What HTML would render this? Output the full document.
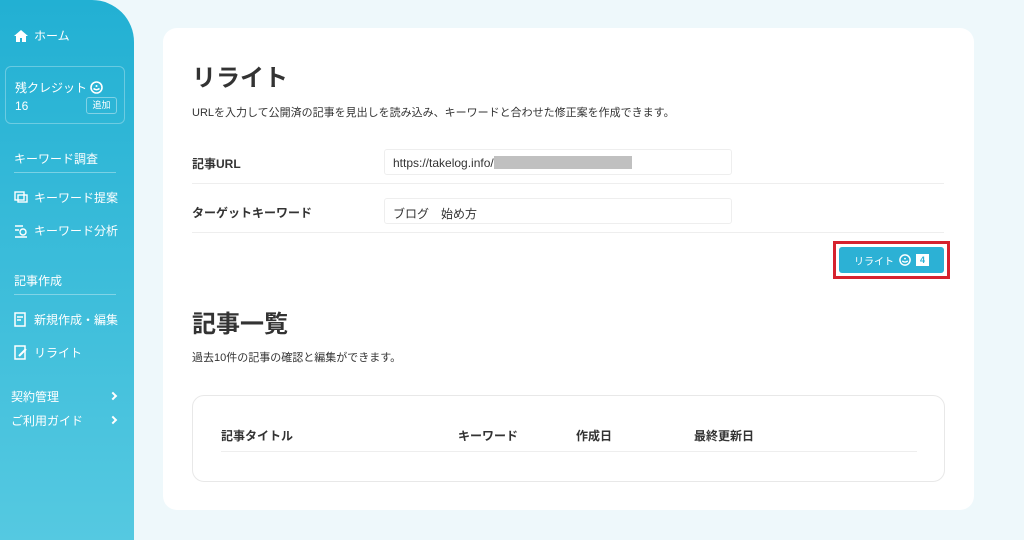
<!DOCTYPE html>
<html><head><meta charset="utf-8"><style>
*{box-sizing:border-box;margin:0;padding:0}
body{width:1024px;height:540px;overflow:hidden;background:#eef8fb;font-family:"Liberation Sans","Noto Sans CJK JP",sans-serif;color:#333;position:relative}
.side{position:absolute;left:0;top:0;width:134px;height:540px;background:linear-gradient(#22b0d3,#55c9e1);border-top-right-radius:42px;color:#fff;font-size:12px}
.side .it{position:absolute;left:14px;display:flex;align-items:center;gap:6px}
.side .hd{position:absolute;left:14px;font-size:12px}
.side .ln{position:absolute;left:14px;width:102px;height:1px;background:rgba(255,255,255,.35)}
.credit{position:absolute;left:5px;top:66px;width:120px;height:58px;border:1px solid rgba(255,255,255,.3);border-radius:6px}
.card{position:absolute;left:163px;top:28px;width:811px;height:482px;background:#fff;border-radius:14px}
.abs{position:absolute}
.inp{position:absolute;left:221px;width:348px;height:26px;border:1px solid #eee;border-radius:3px;font-size:12px;padding:6px 0 0 8px;color:#333}
.hr{position:absolute;left:29px;width:752px;height:1px;background:#eee}
.lbl{position:absolute;left:29px;font-size:12px;font-weight:bold}
.chev{position:absolute;left:110px;width:6px;height:6px;border-top:2px solid #fff;border-right:2px solid #fff;transform:rotate(45deg)}
</style></head><body>
<div class="side">
 <div class="it" style="top:27px"><svg width="14" height="12" viewBox="0 0 14 12"><path d="M7 0L0 6h2v6h4V8h2v4h4V6h2z" fill="#fff"/></svg>ホーム</div>
 <div class="credit">
  <div class="abs" style="left:9px;top:12px;font-size:12px;white-space:nowrap">残クレジット <svg width="13" height="13" viewBox="0 0 13 13" style="vertical-align:-2px"><circle cx="6.5" cy="6.5" r="5.5" fill="none" stroke="#fff" stroke-width="1.6"/><path d="M3.5 7.5q3 2.5 6 0" fill="none" stroke="#fff" stroke-width="1.5"/><circle cx="6.5" cy="5" r="1" fill="#fff"/></svg></div>
  <div class="abs" style="left:9px;top:32px;font-size:12px">16</div>
  <div class="abs" style="left:80px;top:30px;width:31px;height:17px;border:1px solid rgba(255,255,255,.4);border-radius:3px;font-size:9px;text-align:center;line-height:15px">追加</div>
 </div>
 <div class="hd" style="top:150px">キーワード調査</div>
 <div class="ln" style="top:172px"></div>
 <div class="it" style="top:189px"><svg width="14" height="14" viewBox="0 0 14 14"><rect x="1" y="1" width="9" height="8" fill="none" stroke="#fff" stroke-width="1.4"/><rect x="4" y="4" width="9" height="7" fill="none" stroke="#fff" stroke-width="1.4"/></svg>キーワード提案</div>
 <div class="it" style="top:222px"><svg width="14" height="14" viewBox="0 0 14 14"><path d="M1 2h8M1 6h4M1 13h12" stroke="#fff" stroke-width="1.4"/><circle cx="9" cy="8" r="3" fill="none" stroke="#fff" stroke-width="1.4"/></svg>キーワード分析</div>
 <div class="hd" style="top:272px">記事作成</div>
 <div class="ln" style="top:294px"></div>
 <div class="it" style="top:311px"><svg width="14" height="15" viewBox="0 0 14 15"><rect x="1" y="1" width="10" height="13" fill="none" stroke="#fff" stroke-width="1.5"/><path d="M3 5h6M3 8h4" stroke="#fff" stroke-width="1.4"/></svg>新規作成・編集</div>
 <div class="it" style="top:344px"><svg width="14" height="15" viewBox="0 0 14 15"><rect x="1" y="1" width="10" height="13" fill="none" stroke="#fff" stroke-width="1.5"/><path d="M5 11l7-7" stroke="#fff" stroke-width="2"/></svg>リライト</div>
 <div class="abs" style="left:11px;top:388px">契約管理</div><div class="chev" style="top:393px"></div>
 <div class="abs" style="left:11px;top:412px">ご利用ガイド</div><div class="chev" style="top:417px"></div>
</div>
<div class="card">
 <div class="abs" style="left:29px;top:30px;font-size:24px;font-weight:bold">リライト</div>
 <div class="abs" style="left:29px;top:76px;font-size:11px">URLを入力して公開済の記事を見出しを読み込み、キーワードと合わせた修正案を作成できます。</div>
 <div class="lbl" style="top:127px">記事URL</div>
 <div class="inp" style="top:121px">https://takelog.info/<span style="display:inline-block;width:138px;height:13px;background:#c0c0c0;vertical-align:-2px"></span></div>
 <div class="hr" style="top:155px"></div>
 <div class="lbl" style="top:176px">ターゲットキーワード</div>
 <div class="inp" style="top:170px">ブログ　始め方</div>
 <div class="hr" style="top:204px"></div>
 <div class="abs" style="left:670px;top:213px;width:117px;height:38px;border:3px solid #d6222e"></div>
 <div class="abs" style="left:676px;top:219px;width:105px;height:26px;background:#2cb1d5;border-radius:3px;color:#fff;font-size:10px;display:flex;align-items:center;justify-content:center;gap:5px">リライト <svg width="12" height="12" viewBox="0 0 13 13"><circle cx="6.5" cy="6.5" r="5.5" fill="none" stroke="#fff" stroke-width="1.6"/><path d="M3.5 7.5q3 2.5 6 0" fill="none" stroke="#fff" stroke-width="1.5"/><circle cx="6.5" cy="5" r="1" fill="#fff"/></svg><span style="display:inline-block;background:#fff;color:#2cb1d5;font-size:9px;line-height:12px;padding:0 4px;font-weight:bold">4</span></div>
 <div class="abs" style="left:29px;top:276px;font-size:24px;font-weight:bold">記事一覧</div>
 <div class="abs" style="left:29px;top:321px;font-size:11px">過去10件の記事の確認と編集ができます。</div>
 <div class="abs" style="left:29px;top:367px;width:753px;height:87px;border:1px solid #e8e8e8;border-radius:12px">
  <div class="abs" style="left:28px;top:31px;font-size:12px;font-weight:bold">記事タイトル</div>
  <div class="abs" style="left:265px;top:31px;font-size:12px;font-weight:bold">キーワード</div>
  <div class="abs" style="left:383px;top:31px;font-size:12px;font-weight:bold">作成日</div>
  <div class="abs" style="left:501px;top:31px;font-size:12px;font-weight:bold">最終更新日</div>
  <div class="abs" style="left:28px;top:55px;width:696px;height:1px;background:#eee"></div>
 </div>
</div>
</body></html>
